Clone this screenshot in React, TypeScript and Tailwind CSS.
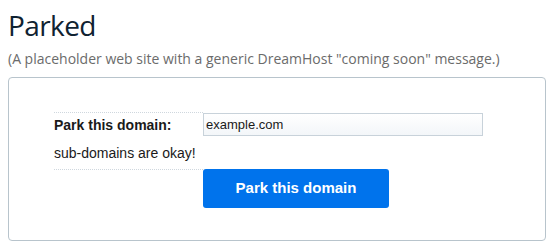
export default function App() {
  return (
    <div className="h-[250px] w-[554px] bg-white px-2 pt-[6px]">
      <h1 className="font-['Open_Sans','Noto_Sans',sans-serif] text-[28px] leading-[38px] tracking-[-0.6px] text-[#0f2231]">
        Parked
      </h1>
      <p className="mt-[4px] font-['Open_Sans','Noto_Sans',sans-serif] text-[14px] leading-[22px] text-[#6b6b6b]">
        (A placeholder web site with a generic DreamHost "coming soon" message.)
      </p>
      <div className="mt-[7px] h-[164px] w-[538px] rounded-[4px] border border-[#b8c4cc] pl-[45px] pt-[34px] font-['Liberation_Sans',sans-serif] text-[14px] text-[#1a1a1a]">
        <div className="grid grid-cols-[149px_280px]">
          <div className="flex h-[26px] items-center border-t border-dotted border-[#cfd7de] font-bold">
            Park this domain:
          </div>
          <div className="pt-px">
            <input
              defaultValue="example.com"
              className="h-[23px] w-[280px] border border-[#c8d2da] bg-gradient-to-b from-white to-[#f3f6f9] px-[2px] font-['Liberation_Sans',sans-serif] text-[13px] text-[#1a1a1a] outline-none"
            />
          </div>
          <div className="flex h-[31px] items-center">sub-domains are okay!</div>
          <div />
          <div className="border-t border-dotted border-[#cfd7de]" />
          <div>
            <button
              type="button"
              className="h-[39px] w-[186px] rounded-[3px] bg-[#0073ec] text-[15px] font-bold text-white"
            >
              Park this domain
            </button>
          </div>
        </div>
      </div>
    </div>
  );
}
